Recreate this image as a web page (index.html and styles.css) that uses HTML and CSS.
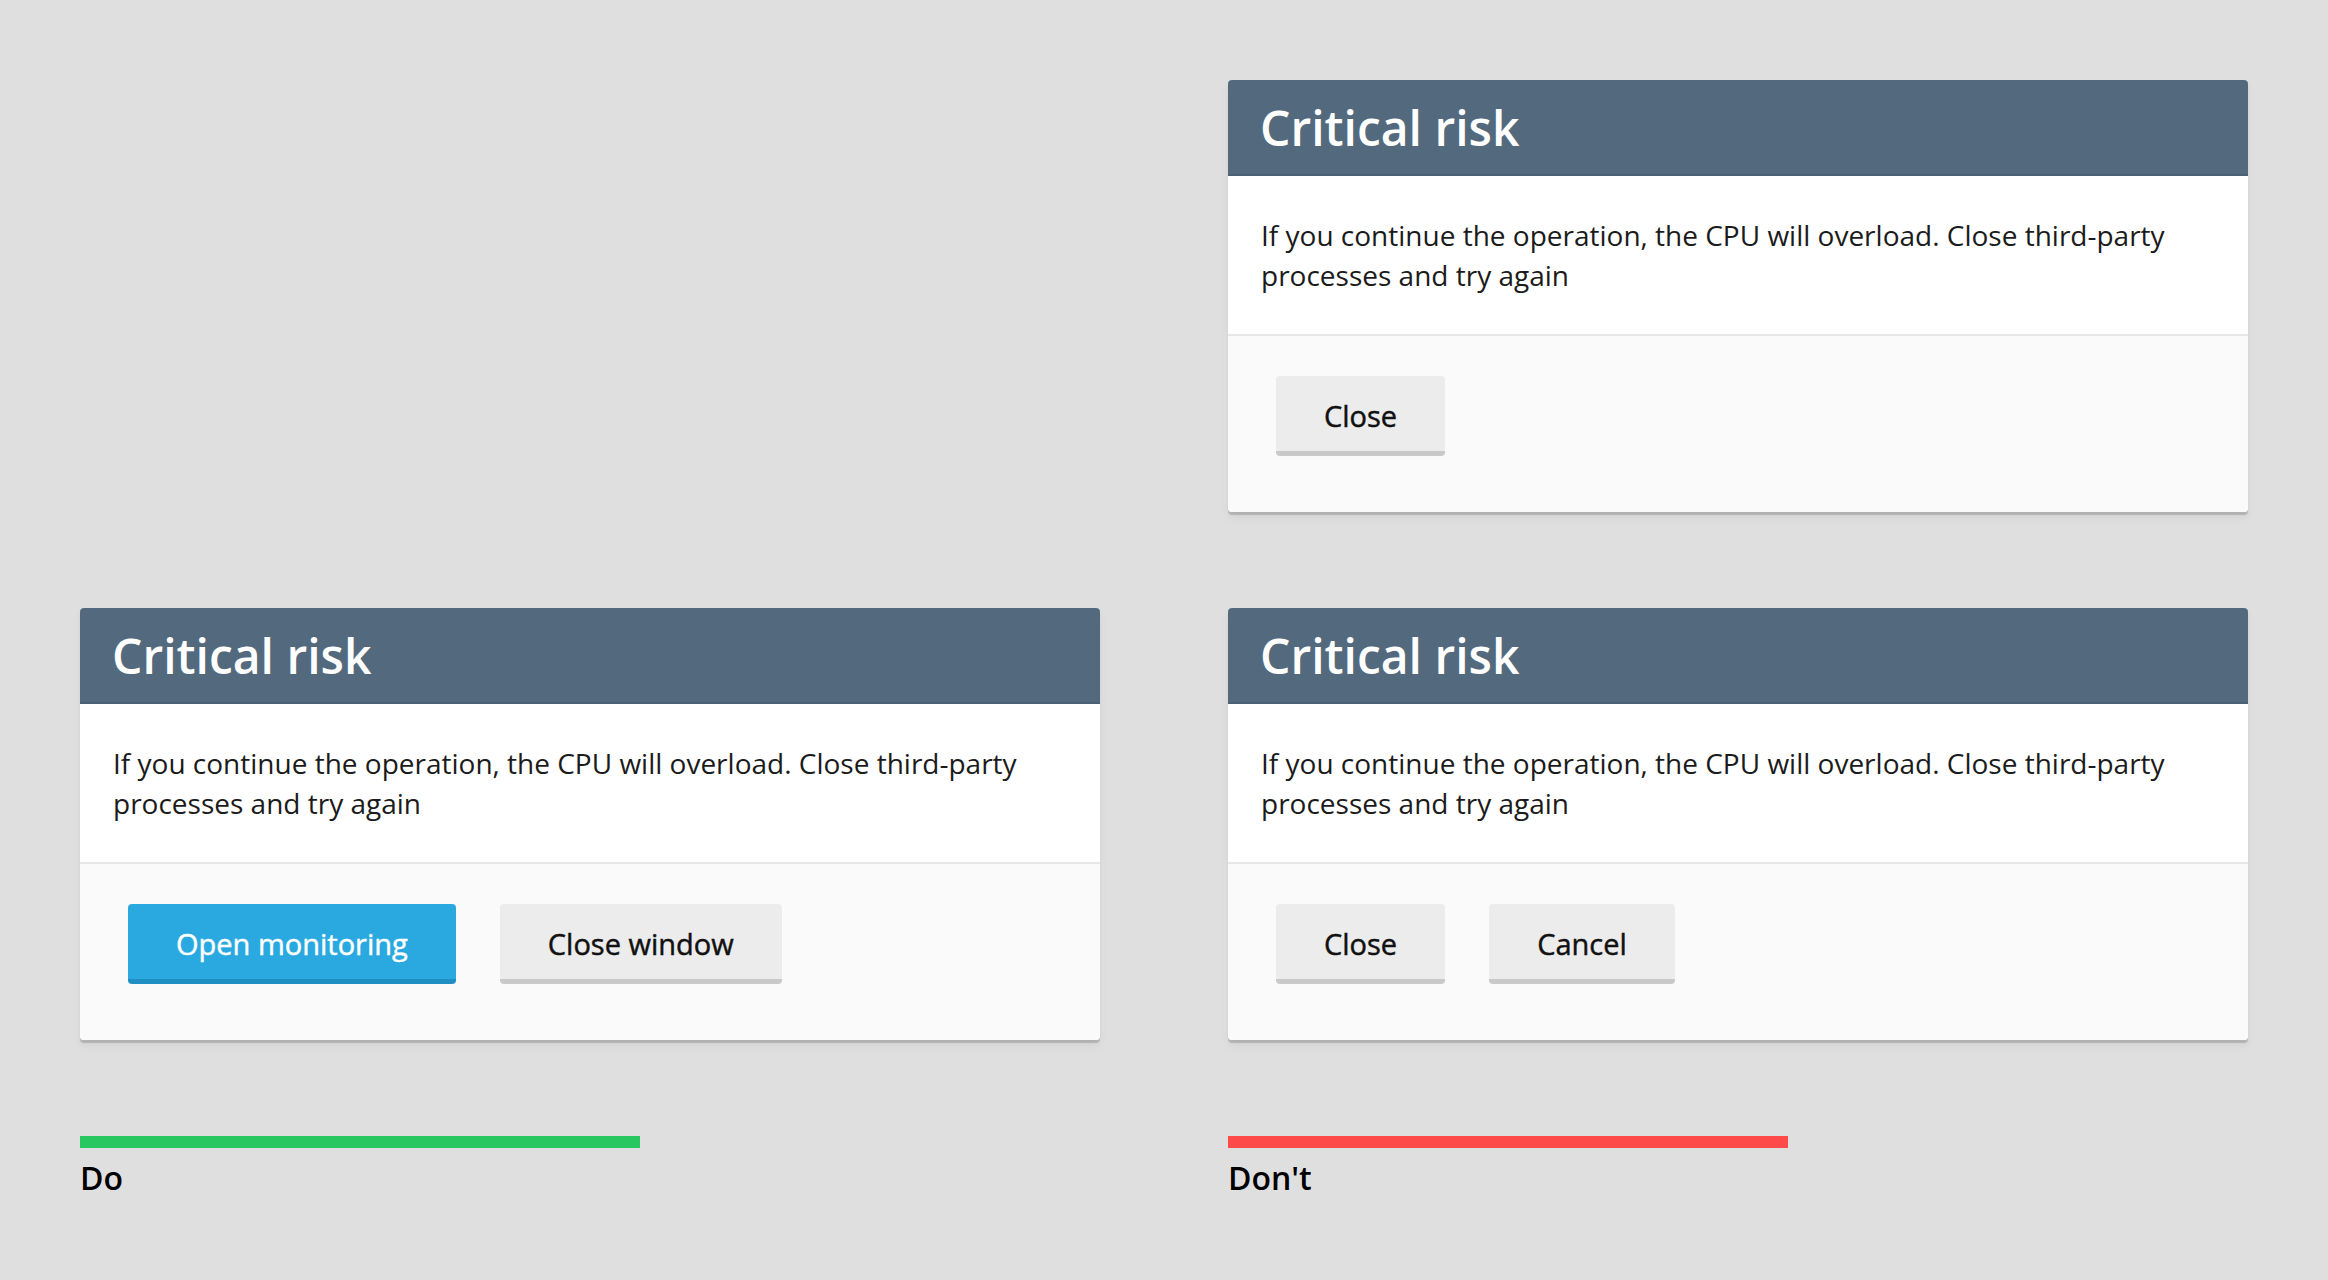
FILE: index.html
```html
<!DOCTYPE html>
<html lang="en">
<head>
<meta charset="utf-8">
<title>Critical risk dialogs</title>
<link rel="stylesheet" href="styles.css">
</head>
<body>
<main class="board">
  <div class="cell"></div>
  <section class="dialog">
    <header class="dialog-head"><h2 class="dialog-title">Critical risk</h2></header>
    <div class="dialog-body">If you continue the operation, the CPU will overload. Close third-party processes and try again</div>
    <footer class="dialog-foot">
      <button class="btn">Close</button>
    </footer>
  </section>

  <section class="dialog">
    <header class="dialog-head"><h2 class="dialog-title">Critical risk</h2></header>
    <div class="dialog-body">If you continue the operation, the CPU will overload. Close third-party processes and try again</div>
    <footer class="dialog-foot">
      <button class="btn btn-primary">Open monitoring</button>
      <button class="btn">Close window</button>
    </footer>
  </section>
  <section class="dialog">
    <header class="dialog-head"><h2 class="dialog-title">Critical risk</h2></header>
    <div class="dialog-body">If you continue the operation, the CPU will overload. Close third-party processes and try again</div>
    <footer class="dialog-foot">
      <button class="btn">Close</button>
      <button class="btn">Cancel</button>
    </footer>
  </section>

  <div class="verdict">
    <div class="verdict-bar verdict-do"></div>
    <div class="verdict-label">Do</div>
  </div>
  <div class="verdict">
    <div class="verdict-bar verdict-dont"></div>
    <div class="verdict-label">Don't</div>
  </div>
</main>
</body>
</html>
```
FILE: styles.css
```css
html, body {
  margin: 0;
  padding: 0;
  background: #e0dfe0;
}
body {
  font-family: "Open Sans", "Noto Sans", sans-serif;
  color: #1b1b1b;
}
.board {
  display: grid;
  grid-template-columns: 1020px 1020px;
  column-gap: 128px;
  row-gap: 96px;
  padding: 80px 80px 0 80px;
  align-items: start;
}
.dialog {
  background: #ffffff;
  border-radius: 4px;
  overflow: hidden;
  box-shadow: 0 3px 1px rgba(0, 0, 0, 0.17), 0 6px 10px rgba(0, 0, 0, 0.05);
}
.dialog-head {
  height: 96px;
  box-sizing: border-box;
  background: #536a7e;
  border-bottom: 2px solid #4b6074;
  display: flex;
  align-items: center;
  padding: 2px 32px 0;
}
.dialog-title {
  margin: 0;
  font-size: 48px;
  font-weight: 600;
  color: #ffffff;
  line-height: 1.362;
}
.dialog-body {
  padding: 39px 33px;
  font-size: 28px;
  line-height: 40px;
  color: #1b1b1b;
}
.dialog-foot {
  background: #fafafa;
  border-top: 2px solid #e7e7e7;
  padding: 40px 48px 56px;
  display: flex;
  gap: 44px;
}
.btn {
  font-family: "Open Sans", "Noto Sans", sans-serif;
  font-size: 29px;
  font-weight: 400;
  -webkit-text-stroke: 0.45px currentColor;
  color: #111111;
  height: 80px;
  padding: 3px 48px 0;
  border: 0;
  border-bottom: 5px solid #c9c9c9;
  border-radius: 4px;
  background: #ececec;
  line-height: 1;
}
.btn-primary {
  background: #29a9df;
  border-bottom-color: #1e8ec3;
  color: #ffffff;
}
.verdict {
  display: flex;
  flex-direction: column;
}
.verdict-bar {
  width: 560px;
  height: 12px;
}
.verdict-do {
  background: #28c75f;
}
.verdict-dont {
  background: #ff4a4a;
}
.verdict-label {
  margin-top: 8px;
  font-size: 32px;
  font-weight: 600;
  color: #000000;
}
```
